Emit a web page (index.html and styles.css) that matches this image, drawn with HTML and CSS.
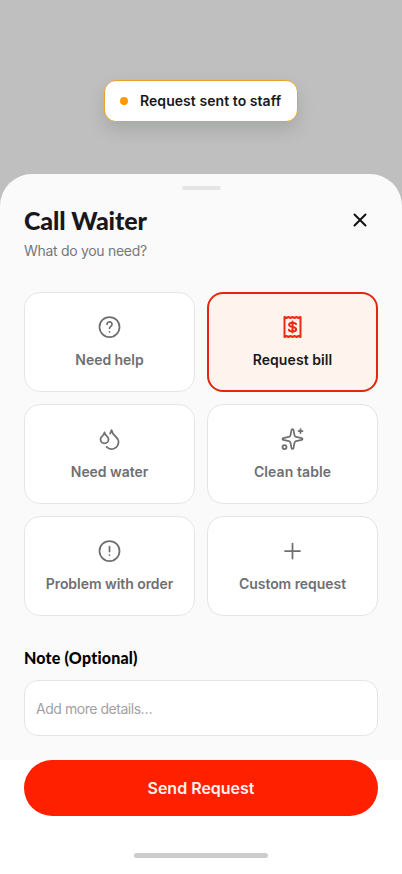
FILE: index.html
```html
<!DOCTYPE html>
<html lang="en">
<head>
<meta charset="utf-8">
<meta name="viewport" content="width=device-width, initial-scale=1">
<title>Call Waiter</title>
<link rel="stylesheet" href="styles.css">
</head>
<body>
<div class="screen">
  <div class="toast" role="status"><span class="toast-dot"></span><span class="toast-text">Request sent to staff</span></div>
  <main class="sheet">
    <div class="grabber"></div>
    <header class="head">
      <div>
        <h1 class="title">Call Waiter</h1>
        <p class="subtitle">What do you need?</p>
      </div>
      <button class="close" aria-label="Close"><svg class="icon" viewBox="0 0 24 24"><path d="M18 6 6 18M6 6l12 12"/></svg></button>
    </header>
    <div class="options">
      <button class="option">
        <svg class="icon" viewBox="0 0 24 24"><circle cx="12" cy="12" r="10"/><path d="M9.500 9.300a2.500 2.500 0 1 1 3.900 2.060c-.760.520-1.400 1.020-1.400 1.940M12 16.800h.01"/></svg>
        <span class="label">Need help</span>
      </button>
      <button class="option selected">
        <svg class="icon" viewBox="0 0 24 24"><path d="M4 2v20l2-1 2 1 2-1 2 1 2-1 2 1 2-1 2 1V2l-2 1-2-1-2 1-2-1-2 1-2-1-2 1Z"/><path d="M15.500 9C15 8 13.800 7.700 12 7.700c-2 0-3.400.600-3.400 2.100 0 3.200 7 1.200 7 4.400 0 1.500-1.500 2.200-3.600 2.200-1.900 0-3.200-.600-3.600-1.600M12 6.500v11"/></svg>
        <span class="label wide">Request bill</span>
      </button>
      <button class="option">
        <svg class="icon" viewBox="0 0 24 24"><path d="M7 16.300c2.200 0 4-1.830 4-4.050 0-1.160-.570-2.260-1.710-3.190S7.290 6.750 7 5.300c-.290 1.450-1.140 2.840-2.290 3.760S3 11.100 3 12.250c0 2.220 1.800 4.050 4 4.050z"/><path d="M12.560 6.600A10.970 10.970 0 0 0 14 3.020c.500 2.500 2 4.900 4 6.500s3 3.500 3 5.500a6.980 6.980 0 0 1-11.910 4.970"/></svg>
        <span class="label">Need water</span>
      </button>
      <button class="option">
        <svg class="icon" viewBox="0 0 24 24"><path d="M11.020 2.810a1 1 0 0 1 1.960 0l1.050 5.560a2 2 0 0 0 1.600 1.600l5.560 1.050a1 1 0 0 1 0 1.960l-5.560 1.050a2 2 0 0 0-1.600 1.600l-1.050 5.560a1 1 0 0 1-1.960 0l-1.050-5.560a2 2 0 0 0-1.600-1.600l-5.560-1.050a1 1 0 0 1 0-1.960l5.560-1.050a2 2 0 0 0 1.600-1.600z"/><path d="M20 2v4M22 4h-4"/><circle cx="4" cy="20" r="2"/></svg>
        <span class="label wide">Clean table</span>
      </button>
      <button class="option">
        <svg class="icon" viewBox="0 0 24 24"><circle cx="12" cy="12" r="10"/><path d="M12 7.500v5M12 16h.01"/></svg>
        <span class="label">Problem with order</span>
      </button>
      <button class="option">
        <svg class="icon" viewBox="0 0 24 24"><path d="M12 4.500v15M4.500 12h15"/></svg>
        <span class="label">Custom request</span>
      </button>
    </div>
    <label class="note-label" for="note">Note (Optional)</label>
    <input class="note" id="note" type="text" placeholder="Add more details…">
  </main>
  <footer class="footer">
    <button class="send">Send Request</button>
    <div class="home"></div>
  </footer>
</div>
</body>
</html>
```
FILE: styles.css
```css
* { box-sizing: border-box; }
body { margin: 0; background: #fff; font-family: Inter, "Liberation Sans", sans-serif; }
button { margin: 0; padding: 0; border: 0; background: none; font: inherit; }
.screen { width: 402px; height: 874px; overflow: hidden; display: flex; flex-direction: column; align-items: center; background: linear-gradient(#bfbfbf 0 300px, #fff 300px); }
.toast { width: 194px; height: 42px; margin-top: 80px; flex: none; display: flex; align-items: center; gap: 12px; padding-left: 15px; border: 1px solid #e9a427; border-radius: 12px; background: #fff; box-shadow: 0 8px 18px rgba(0,0,0,.12); }
.toast-dot { width: 8px; height: 8px; border-radius: 50%; background: #fe9a00; }
.toast-text { font-size: 14px; font-weight: 600; line-height: 20px; color: #18181b; letter-spacing: .06px; white-space: nowrap; }
.sheet { width: 402px; height: 586px; flex: none; margin-top: 52px; padding: 12px 24px 0; border-radius: 32px 32px 0 0; background: #fafafa; }
.grabber { width: 39px; height: 4px; margin: 0 auto; border-radius: 2px; background: #e5e5e5; }
.head { height: 102px; padding-top: 14px; display: flex; justify-content: space-between; align-items: flex-start; }
.title { margin: 0; font-family: Lato, sans-serif; font-size: 25px; font-weight: 900; line-height: 32px; letter-spacing: -.12px; color: #18181b; white-space: nowrap; }
.subtitle { margin: 5px 0 0; font-size: 14px; line-height: 20px; letter-spacing: -.3px; color: #77777a; white-space: nowrap; }
.close { width: 36px; height: 36px; margin-top: -2px; display: grid; place-items: center; color: #111; }
.icon { display: block; width: 25px; height: 24px; fill: none; stroke: currentColor; stroke-width: 1.75; stroke-linecap: round; stroke-linejoin: round; }
.close .icon { width: 22px; height: 22px; stroke-width: 2.2; }
.options { display: grid; grid-template-columns: 171px 171px; grid-auto-rows: 100px; gap: 12px; }
.option { display: flex; flex-direction: column; align-items: center; gap: 11px; padding-top: 22px; border: 1px solid #e5e5e5; border-radius: 16px; background: #fff; color: #6f6f72; }
.option.selected { padding-top: 21px; border: 2px solid #e5260e; background: #fff3ed; color: #f02a12; }
.selected .icon { stroke-width: 2; }
.label { font-size: 14px; font-weight: 600; line-height: 20px; letter-spacing: -.05px; white-space: nowrap; }
.label.wide { letter-spacing: .08px; }
.selected .label { color: #18181b; }
.note-label { display: block; height: 20px; margin: 32px 0 12px; font-family: Lato, sans-serif; font-size: 16px; font-weight: 900; line-height: 20px; letter-spacing: .2px; color: #000; }
.note { display: block; width: 354px; height: 56px; padding: 0 11px; border: 1px solid #e5e5e5; border-radius: 14px; background: #fff; font-family: Inter, sans-serif; font-size: 14px; letter-spacing: -.46px; }
.note::placeholder { color: #a1a1a5; opacity: 1; }
.footer { width: 402px; height: 114px; padding: 0 24px; background: #fff; }
.send { display: block; width: 354px; height: 56px; border-radius: 28px; background: #ff2000; color: #fff3ed; font-size: 16px; font-weight: 600; line-height: 56px; letter-spacing: 0; }
.home { width: 134px; height: 5px; margin: 37px auto 0; border-radius: 3px; background: #ccc; }
```
